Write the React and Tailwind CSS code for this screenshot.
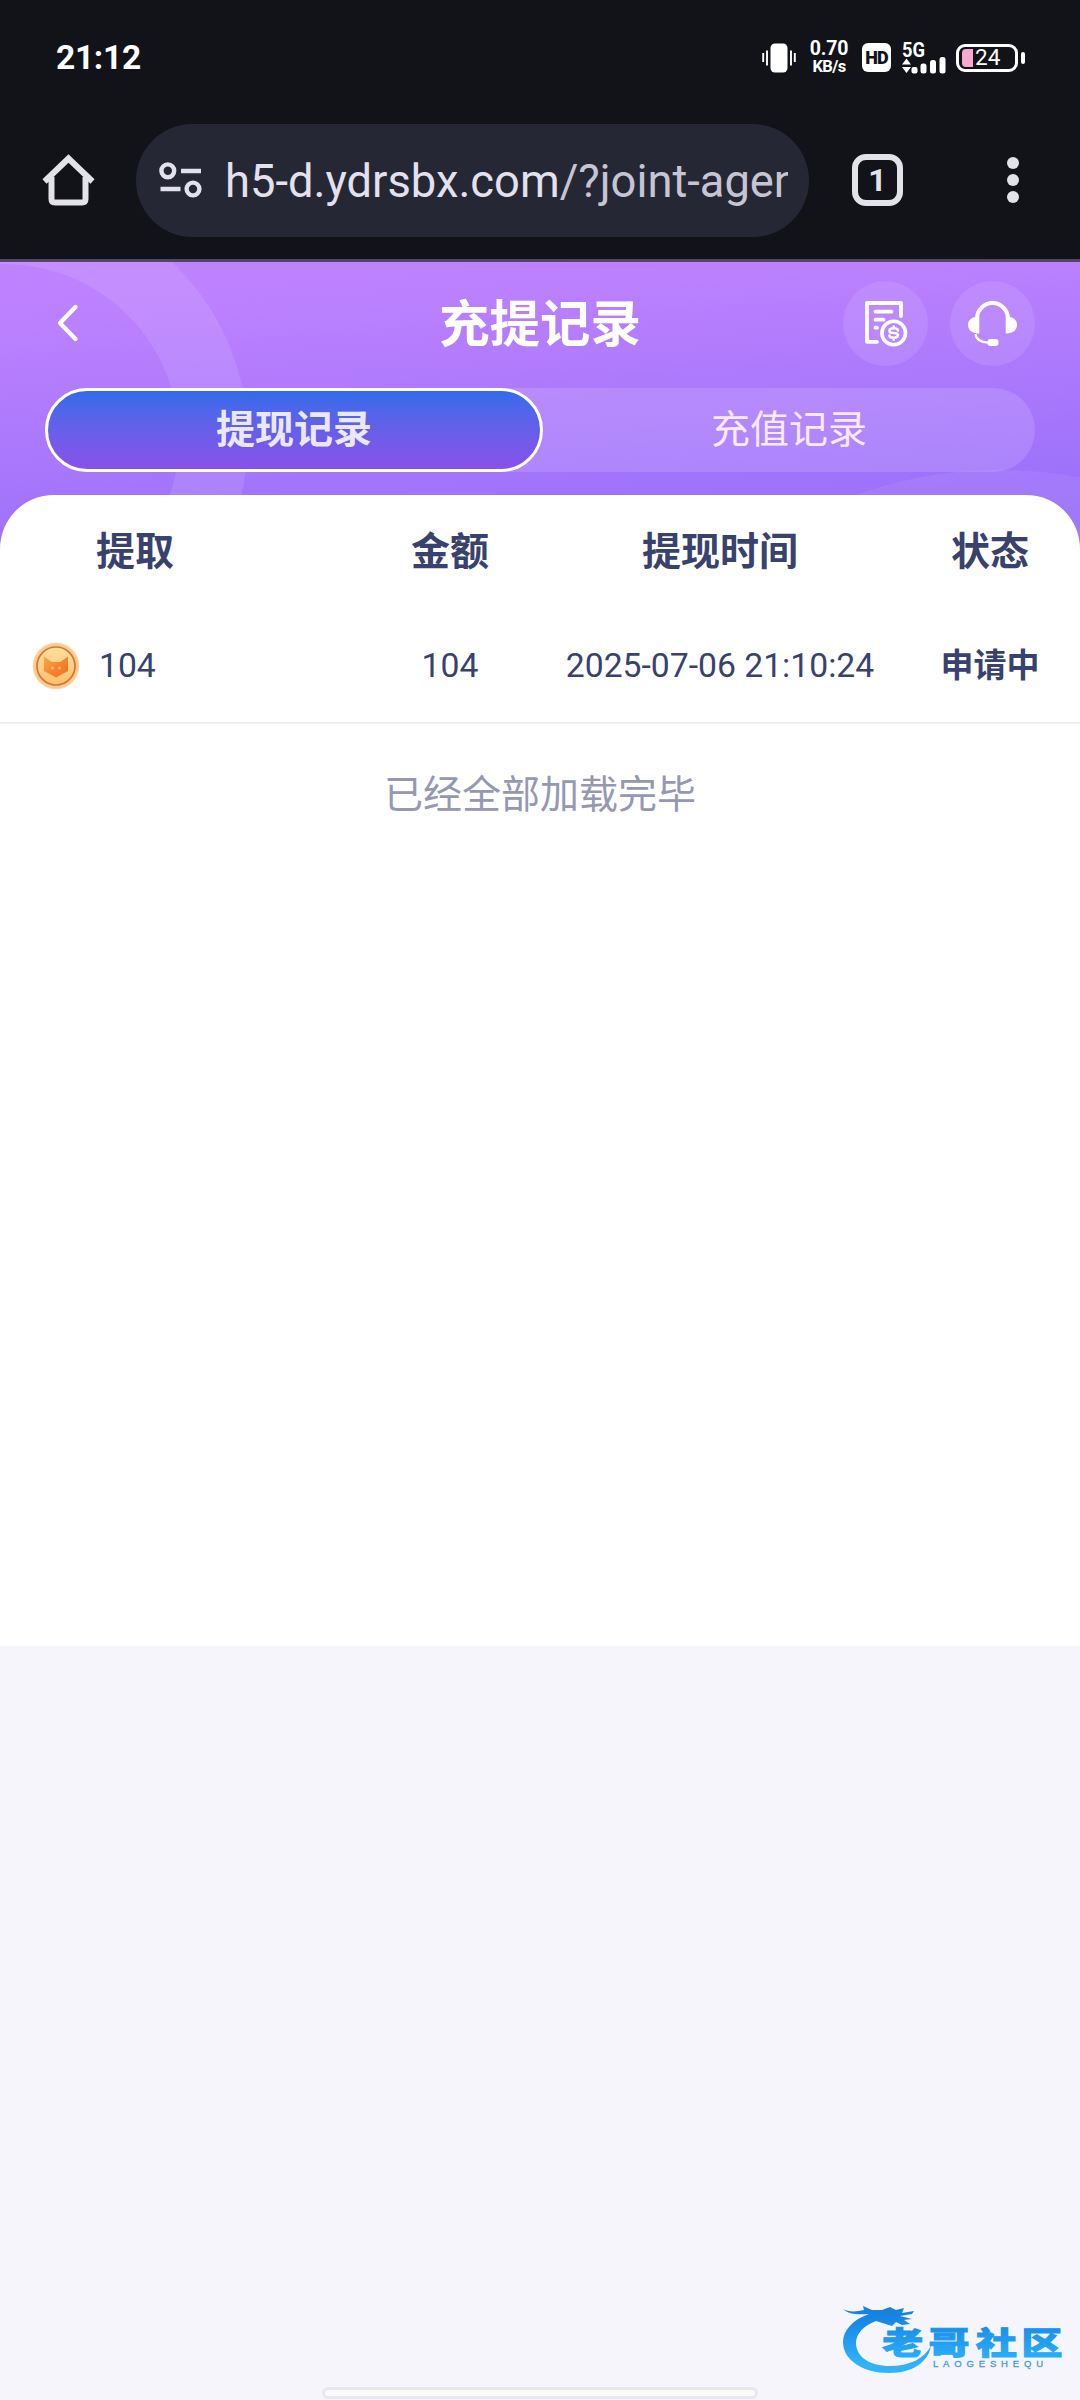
// src/App.jsx
import React, { useState } from "react";

const TABS = [
  { key: "withdraw", label: "提现记录" },
  { key: "recharge", label: "充值记录" },
];

const RECORDS = [
  { id: 1, coin: "104", amount: "104", time: "2025-07-06 21:10:24", status: "申请中" },
];

// 系统状态栏
const StatusBar = () => (
  <div className="flex h-[115px] items-center justify-between pl-[56px] pr-[55px] text-white">
    <span className="text-[33.5px] font-bold leading-none tracking-[-0.3px]">21:12</span>
    <div className="flex items-center">
      {/* 震动 */}
      <svg className="h-[30px] w-[34px]" viewBox="0 0 34 30" fill="#fff">
        <rect x="8.5" y="0.5" width="17" height="29" rx="4.5" />
        <path d="M1.2 10v9M5 7.5v15M29 7.5v15M32.8 10v9" stroke="#fff" strokeWidth="1.9" />
      </svg>
      <div className="ml-[13px] w-[40px] whitespace-nowrap text-center font-bold">
        <div className="text-[19.5px] leading-[18px] tracking-[-0.2px]">0.70</div>
        <div className="text-[16.5px] leading-[17px] tracking-[-0.6px]">KB/s</div>
      </div>
      <div className="ml-[13px] flex h-[29px] w-[29px] items-center justify-center rounded-[6px] bg-white">
        <span className="text-[18px] font-black leading-none tracking-[-0.8px] text-[#121318]">HD</span>
      </div>
      {/* 信号 */}
      <svg className="ml-[11px] h-[32px] w-[46px] overflow-visible" viewBox="0 0 46 32" fill="#fff">
        <text x="0" y="14.500" fontSize="20" fontWeight="700" textLength="23" lengthAdjust="spacingAndGlyphs">5G</text>
        <path d="M0 22.500L4.500 16.500l4.500 6zM0 25h9L4.500 31z" />
        <rect x="9.500" y="25" width="6" height="6.500" rx="2" />
        <rect x="18.500" y="21.500" width="6" height="10" rx="2.500" />
        <rect x="28" y="18" width="6" height="13.500" rx="2.500" />
        <rect x="37.500" y="15" width="6" height="16.500" rx="2.500" />
      </svg>
      {/* 电量 */}
      <div className="ml-[8px] flex h-[28px] w-[62px] items-center rounded-[9px] border-[3px] border-white pl-[3px]">
        <div className="h-[18px] w-[11px] rounded-l-[4px] bg-[#f5a9cf]" />
        <span className="ml-[2px] text-[22.5px] leading-none">24</span>
      </div>
      <div className="ml-[3px] h-[12px] w-[4px] rounded-full bg-white" />
    </div>
  </div>
);

// 浏览器地址栏
const AddressBar = () => (
  <div className="flex h-[130px] items-center pl-[42px]">
    <svg className="h-[52px] w-[53px]" viewBox="0 0 53 52" fill="none" stroke="#e3e2e9" strokeWidth="6">
      <path d="M9.500 23v22q0 3.500 3.500 3.500h27q3.500 0 3.500-3.500V23" />
      <path d="M2.500 27.500L26.500 4.500L50.500 27.500" />
    </svg>
    <div className="ml-[41px] flex h-[113px] w-[673px] items-center rounded-full bg-[#262734] pl-[23px]">
      <svg className="h-[36px] w-[43px] shrink-0" viewBox="0 0 43 36" fill="none" stroke="#e3e1ee" strokeWidth="4.400">
        <circle cx="8.800" cy="8.800" r="6.400" />
        <path d="M22 9h20M1.500 27h20" />
        <circle cx="34" cy="27" r="6.400" />
      </svg>
      <div className="ml-[23px] w-[563px] overflow-hidden whitespace-nowrap pt-[4px] text-[45.3px] leading-[60px] text-[#e3e1ee]">
        h5-d.ydrsbx.com<span className="text-[#c6c5d3]">/?joint-agent</span>
      </div>
    </div>
    <div className="ml-[43px] flex h-[52px] w-[51px] items-center justify-center rounded-[14px] border-[6px] border-[#e3e2e9] text-[32px] font-bold leading-none text-[#e3e2e9]">
      1
    </div>
    <div className="ml-[104px] flex flex-col gap-[5px]">
      <span className="h-[12px] w-[12px] rounded-full bg-[#e3e2e9]" />
      <span className="h-[12px] w-[12px] rounded-full bg-[#e3e2e9]" />
      <span className="h-[12px] w-[12px] rounded-full bg-[#e3e2e9]" />
    </div>
  </div>
);

const BillIcon = () => (
  <svg className="ml-[2px] mt-px h-[46px] w-[43px]" viewBox="0 0 43 46" fill="none" stroke="#fff" strokeWidth="3.800" strokeLinecap="round" strokeLinejoin="round">
    <path d="M12 40.800H2V2h34v13" />
    <path d="M10.500 10.700h16M10.500 18.700h8M10.500 26.700h1.500" />
    <circle cx="28.700" cy="32" r="11.800" strokeWidth="3.600" />
    <path d="M33 29.500q0-2.200-4.300-2.200t-4.300 2.400q0 2.300 4.300 2.300t4.300 2.300q0 2.400-4.300 2.400t-4.300-2.200M28.700 25.500v1.500M28.700 37v1.800" strokeWidth="2.600" />
  </svg>
);

const ServiceIcon = () => (
  <svg className="mt-px h-[46px] w-[49px]" viewBox="0 0 49 46" fill="#fff">
    <path d="M9 20V17.500a15.500 15.500 0 0 1 31 0V20" fill="none" stroke="#fff" strokeWidth="4" />
    <path d="M11.300 15.500v17H9.500Q0 31.500 0 24t9-8.500zM37.700 15.500v17H39.500Q49 31.500 49 24t-9-8.500z" />
    <path d="M7.500 33q1 8 12.500 8.700" fill="none" stroke="#fff" strokeWidth="2.200" />
    <rect x="19.500" y="38" width="11" height="7" rx="3" />
  </svg>
);

// 金币图标
const CoinIcon = () => (
  <svg className="h-[48px] w-[48px]" viewBox="0 0 48 48">
    <defs>
      <radialGradient id="coin">
        <stop offset="0.800" stopColor="#fcd091" />
        <stop offset="0.920" stopColor="#fbc98c" />
        <stop offset="1" stopColor="#fde3c4" />
      </radialGradient>
      <linearGradient id="face" x1="0" y1="0" x2="0" y2="1">
        <stop offset="0" stopColor="#fee09c" />
        <stop offset="1" stopColor="#fdbf72" />
      </linearGradient>
      <linearGradient id="fox" x1="0" y1="0" x2="1" y2="1">
        <stop offset="0" stopColor="#fbac50" />
        <stop offset="0.500" stopColor="#f68430" />
        <stop offset="1" stopColor="#f3701c" />
      </linearGradient>
    </defs>
    <circle cx="24" cy="24" r="23.500" fill="url(#coin)" />
    <circle cx="24" cy="24" r="19" fill="url(#face)" stroke="#cf7a33" strokeWidth="1.700" />
    <path d="M12 14.500l8 5.500h8l8-5.500v14.500l-12 6.500-12-6.500z" fill="url(#fox)" />
    <circle cx="20.500" cy="26" r="1.500" fill="#fdb56e" />
    <circle cx="27.500" cy="26" r="1.500" fill="#fdb56e" />
  </svg>
);

// 右下角水印
const Watermark = () => (
  <svg className="h-[84px] w-[244px]" viewBox="0 0 244 84">
    <defs>
      <linearGradient id="wm" x1="0" y1="10" x2="0" y2="80" gradientUnits="userSpaceOnUse">
        <stop offset="0.150" stopColor="#1583e2" />
        <stop offset="0.850" stopColor="#2fb4fb" />
      </linearGradient>
    </defs>
    <g fill="url(#wm)">
      <path d="M33 19C16 25 7 36 7 47C7 65 27 78 53 78C77 78 92 67 95 51C88 64 73 71 54 71C34 71 20 62 20 48C20 39 27 31 40 26L56 31L60 27L66 30L74 29L68 25L76 24L64 21L76 19L78 16L66 18L68 13L60 15L54 12L46 15L36 15L27 11L28 15C20 17 12 17 7 14C12 19 22 20 33 19z" />
      <g transform="scale(1.32 1)" fontSize="31" fontWeight="900" stroke="url(#wm)" strokeWidth="1" fontFamily="'Noto Sans CJK SC', sans-serif">
        <text x="35" y="59">老</text>
        <text x="70" y="59">哥</text>
        <text x="106" y="59">社</text>
        <text x="140.500" y="59">区</text>
      </g>
    </g>
    <text x="97" y="71.500" fontSize="9.500" fill="#3c9be8" stroke="#3c9be8" strokeWidth="0.300" textLength="110" fontFamily="Liberation Sans, sans-serif">LAOGESHEQU</text>
  </svg>
);

const App = () => {
  const [active, setActive] = useState("withdraw");

  return (
    <div className="flex h-[2400px] w-[1080px] flex-col overflow-hidden bg-[#f5f5fb] font-[Roboto,'Noto_Sans_CJK_SC',sans-serif]">
      <header className="h-[262px] shrink-0 border-b-[3px] border-[#54436b] bg-[#121318]">
        <StatusBar />
        <AddressBar />
      </header>

      <main className="relative h-[1384px] shrink-0 overflow-hidden bg-white">
        {/* 背景装饰 */}
        <div className="absolute inset-x-0 top-0 h-[300px] bg-linear-[176deg] from-[#be82ff] from-10% to-[#986ff9] to-88%">
          <svg className="h-[300px] w-[1080px]" viewBox="0 0 1080 300" fill="none">
            <circle cx="4" cy="177" r="209.500" stroke="#fff" strokeOpacity="0.100" strokeWidth="69" />
            <circle cx="1000" cy="641" r="433" fill="#fff" fillOpacity="0.070" />
          </svg>
        </div>

        <div className="relative">
          <div className="grid h-[126px] grid-cols-[1fr_auto_1fr] items-center px-[45px] pb-[4px]">
            <svg className="ml-[12px] h-[38px] w-[22px]" viewBox="0 0 22 38" fill="none" stroke="#fff" strokeWidth="4.200" strokeLinecap="round" strokeLinejoin="round">
              <path d="M18.500 3L3 19l15.500 16" />
            </svg>
            <h1 className="pt-[3px] text-[50.5px] font-bold leading-[56px] text-white">充提记录</h1>
            <div className="flex justify-end gap-[22px]">
              <button type="button" className="flex h-[85px] w-[85px] items-center justify-center rounded-full bg-white/10">
                <BillIcon />
              </button>
              <button type="button" className="flex h-[85px] w-[85px] items-center justify-center rounded-full bg-white/10">
                <ServiceIcon />
              </button>
            </div>
          </div>

          <div className="mx-[45px] flex h-[84px] rounded-full bg-white/13">
            {TABS.map((tab) => (
              <button
                type="button"
                key={tab.key}
                onClick={() => setActive(tab.key)}
                className={
                  active === tab.key
                    ? "h-full w-[498px] rounded-full border-[3px] border-white bg-linear-to-b from-[#2f6bea] to-[#8850ea] text-[39px] font-bold leading-none text-[#eae8ff]"
                    : "h-full flex-1 text-[39px] leading-none text-[#f8e9ff]"
                }
              >
                {tab.label}
              </button>
            ))}
          </div>

          <section className="mt-[23px] h-[1151px] rounded-t-[54px] bg-white text-[#38426d]">
            <div className="grid h-[112px] grid-cols-[360px_180px_360px_180px] items-center pt-[3px] text-center text-[39px] font-bold leading-none">
              <div className="pl-[96px] text-left">提取</div>
              <div>金额</div>
              <div>提现时间</div>
              <div>状态</div>
            </div>
            {RECORDS.map((row) => (
              <div
                key={row.id}
                className="grid h-[117px] grid-cols-[360px_180px_360px_180px] items-center border-b-2 border-[#f0f0f3] pt-[2px] text-center text-[33.7px] leading-none"
              >
                <div className="flex items-center gap-[19px] pl-[32px]">
                  <CoinIcon />
                  <span>{row.coin}</span>
                </div>
                <div>{row.amount}</div>
                <div className="whitespace-nowrap">{row.time}</div>
                <div className="text-[33px] font-bold">{row.status}</div>
              </div>
            ))}
            <p className="pt-[51px] text-center text-[39px] leading-[40px] text-[#9698b2]">已经全部加载完毕</p>
          </section>
        </div>
      </main>

      <footer className="flex flex-1 flex-col justify-end">
        <div className="flex justify-end">
          <Watermark />
        </div>
        <div className="mx-auto mb-px mt-[8px] h-[12px] w-[436px] rounded-full border-[3px] border-[#e8e8ed] bg-[#fafafd]" />
      </footer>
    </div>
  );
};

export default App;
